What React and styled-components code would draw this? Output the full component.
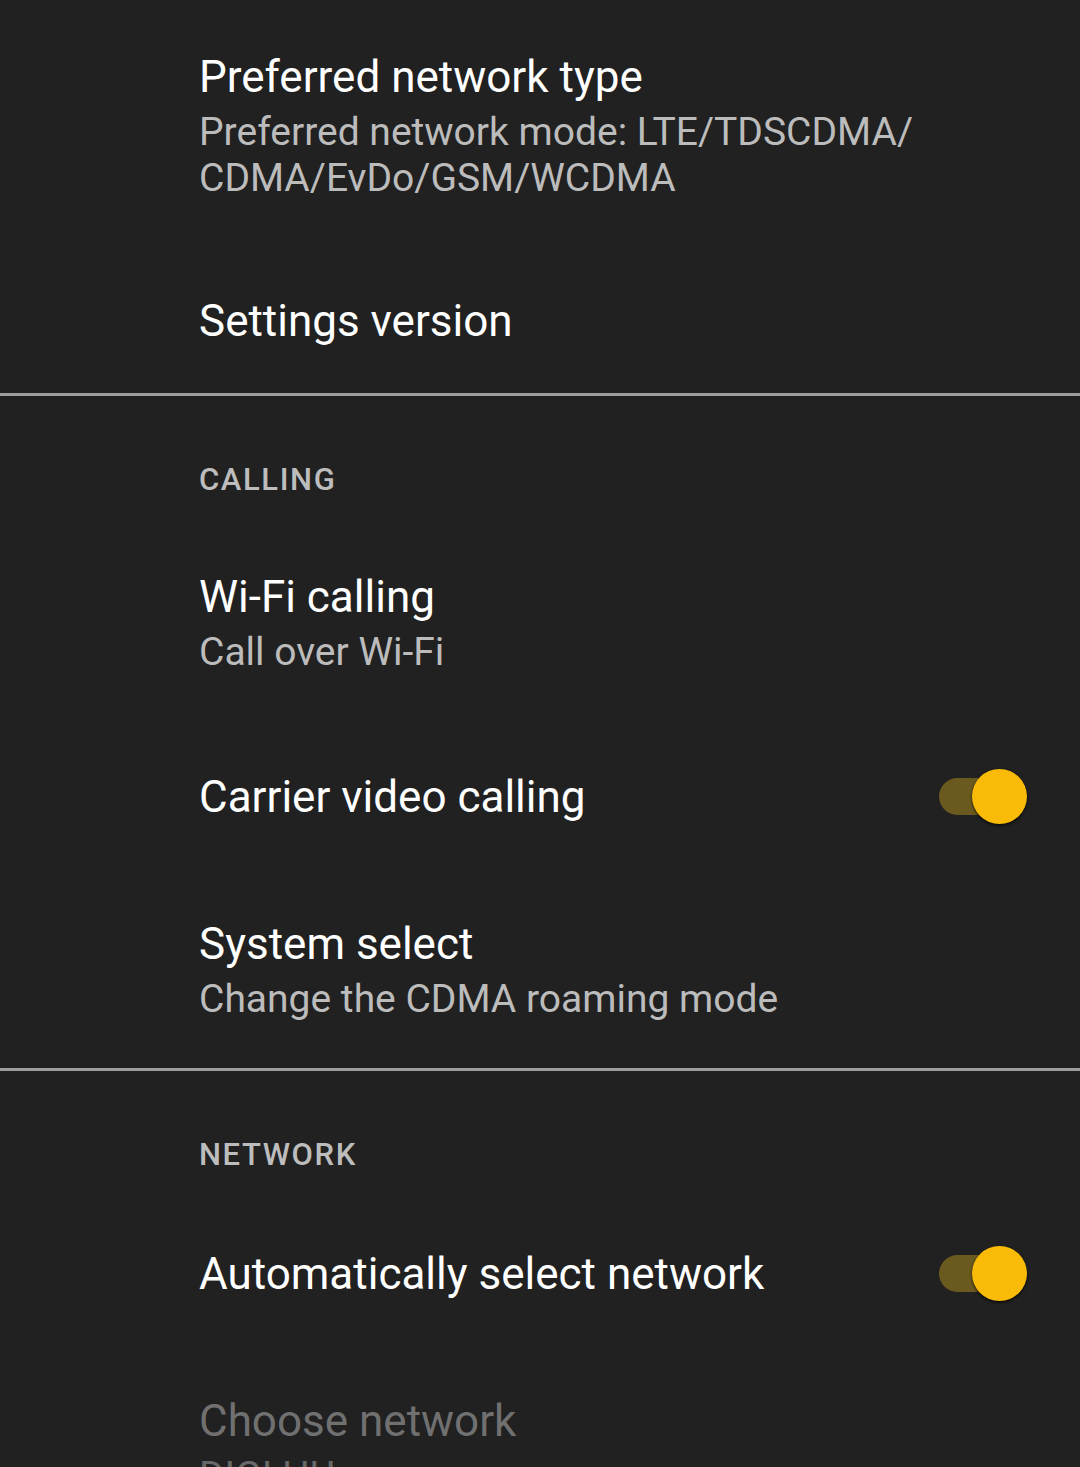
import React from "react";
import styled, { createGlobalStyle } from "styled-components";

const Global = createGlobalStyle`
  html, body {
    margin: 0;
    padding: 0;
    background: #212121;
  }
  body {
    font-family: Roboto, "Noto Sans", "Liberation Sans", sans-serif;
    -webkit-font-smoothing: antialiased;
  }
`;

const Screen = styled.div`
  width: 1080px;
  min-height: 1467px;
  background: #212121;
  overflow: hidden;
  padding-top: 3px;
  box-sizing: border-box;
`;

const Section = styled.section`
  display: flex;
  flex-direction: column;
`;

const Divider = styled.div`
  height: 3px;
  background: #9e9e9e;
`;

const Category = styled.div`
  padding: 64px 0 23px 199px;
  font-size: 31px;
  line-height: 40px;
  font-weight: 500;
  letter-spacing: 1.6px;
  color: #bdbdbd;
  text-transform: uppercase;
`;

const Row = styled.div`
  display: flex;
  align-items: center;
  padding: 48px 53px 46px 199px;
`;

const Texts = styled.div`
  flex: 1;
  display: flex;
  flex-direction: column;
  min-width: 0;
`;

const Title = styled.div`
  font-size: 44px;
  line-height: 52px;
  color: ${(p) => (p.$disabled ? "#707070" : "#ffffff")};
`;

const Summary = styled.div`
  margin-top: 6px;
  font-size: 39px;
  line-height: 46px;
  color: ${(p) => (p.$disabled ? "#686868" : "#bcbcbc")};
`;

const SwitchWrap = styled.div`
  position: relative;
  flex: none;
  width: 88px;
  height: 55px;
  margin-left: 24px;
`;

const Track = styled.div`
  position: absolute;
  left: 0;
  top: 9px;
  width: 80px;
  height: 37px;
  border-radius: 19px;
  background: #6b5a1f;
`;

const Thumb = styled.div`
  position: absolute;
  right: 0;
  top: 0;
  width: 55px;
  height: 55px;
  border-radius: 50%;
  background: #f9bb08;
  box-shadow: 0 1px 3px rgba(0, 0, 0, 0.55), 0 2px 2px rgba(0, 0, 0, 0.3);
`;

function Switch() {
  return (
    <SwitchWrap>
      <Track />
      <Thumb />
    </SwitchWrap>
  );
}

function Pref({ title, summary, toggle, disabled }) {
  return (
    <Row>
      <Texts>
        <Title $disabled={disabled}>{title}</Title>
        {summary && <Summary $disabled={disabled}>{summary}</Summary>}
      </Texts>
      {toggle && <Switch />}
    </Row>
  );
}

export default function App() {
  return (
    <>
      <Global />
      <Screen>
        <Section>
          <Pref
            title="Preferred network type"
            summary={
              <>
                Preferred network mode: LTE/TDSCDMA/
                <br />
                CDMA/EvDo/GSM/WCDMA
              </>
            }
          />
          <Pref title="Settings version" />
        </Section>
        <Divider />
        <Section>
          <Category>Calling</Category>
          <Pref title="Wi-Fi calling" summary="Call over Wi-Fi" />
          <Pref title="Carrier video calling" toggle />
          <Pref title="System select" summary="Change the CDMA roaming mode" />
        </Section>
        <Divider />
        <Section>
          <Category>Network</Category>
          <Pref title="Automatically select network" toggle />
          <Pref title="Choose network" summary="DIGI HU" disabled />
        </Section>
      </Screen>
    </>
  );
}
